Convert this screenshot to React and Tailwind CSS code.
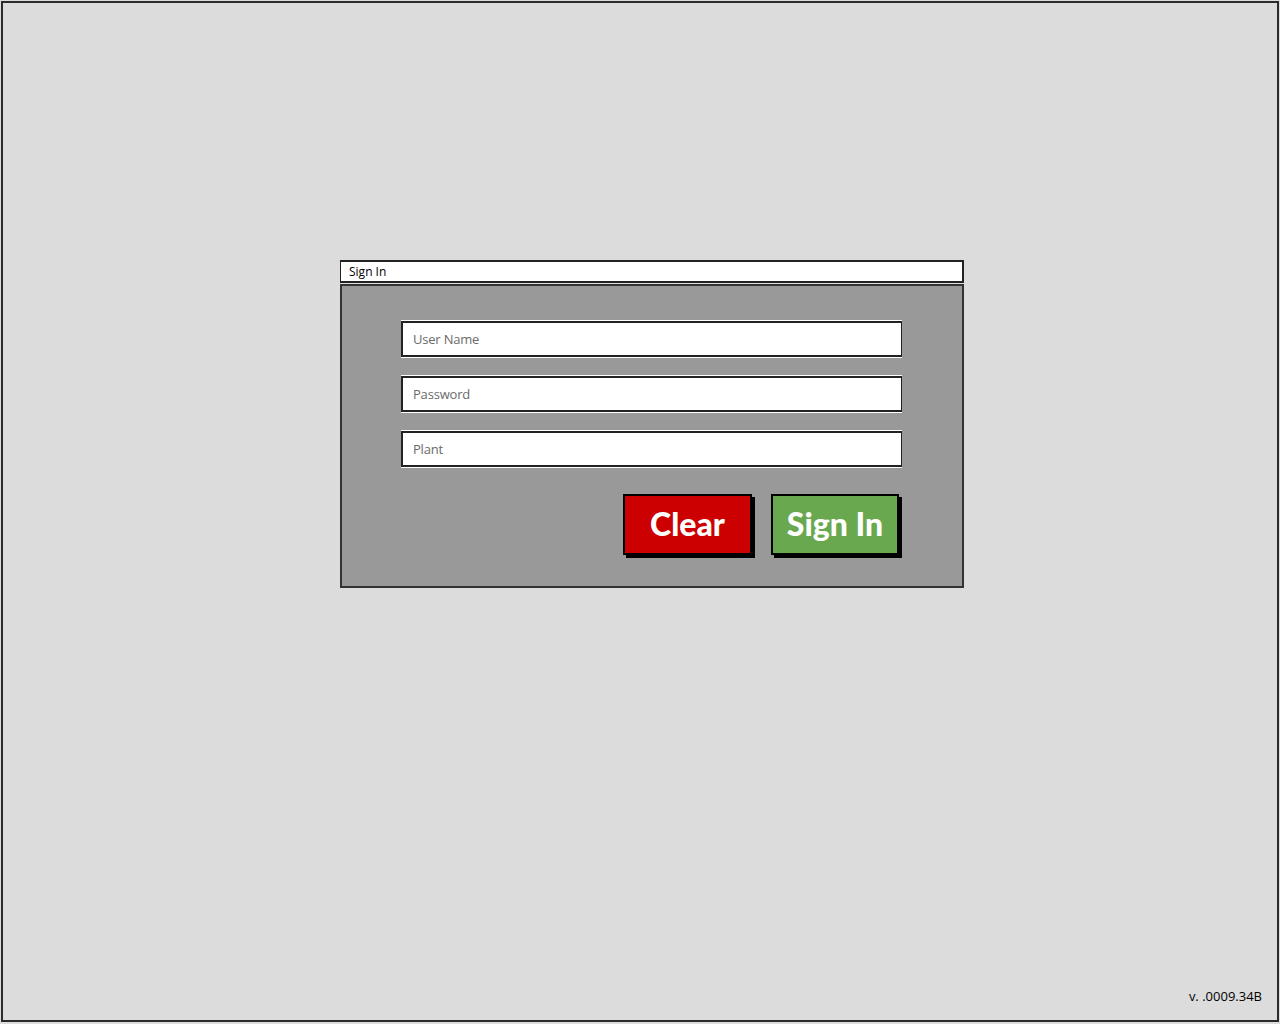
import React from "react";

const sketch = { fontFamily: '"Open Sans", "Liberation Sans", sans-serif' };
const btnFont = { fontFamily: 'Lato, "Open Sans", sans-serif' };

function Field({ label }) {
  return (
    <div className="h-[36px] w-[501px] bg-white border-2 border-[#222] border-r-[1.5px] flex items-center pl-[10px] pt-[1px] text-[13px] tracking-[-0.2px] text-[#6a6a6a] shadow-[0_1px_0_#ffffff,0_-1px_0_#ffffff]">
      {label}
    </div>
  );
}

export default function App() {
  return (
    <div className="w-[1280px] h-[1024px] bg-[#dcdcdc] p-[1px]" style={sketch}>
      <div className="w-[1278px] h-[1021px] border-2 border-[#2b2b2b] flex flex-col relative">
        <div className="pt-[257px] pl-[337px] flex flex-col">
          <div className="w-[624px] flex flex-col">
            <div className="h-[23px] bg-white border-2 border-[#222] border-l-[1.5px] flex items-center pl-[8px] text-[12px] text-black">
              Sign In
            </div>
            <div className="mt-[1px] h-[304px] bg-[#999999] border-2 border-[#333] flex flex-col pl-[59px] pt-[35px]">
              <div className="flex flex-col gap-[19px]">
                <Field label="User Name" />
                <Field label="Password" />
                <Field label="Plant" />
              </div>
              <div className="flex gap-[19px] mt-[27px] pl-[222px]">
                <button
                  className="w-[129px] h-[61px] bg-[#cc0000] border-2 border-black shadow-[3px_3px_0_#000] text-white text-[32px] font-black flex items-center justify-center pb-[2px]"
                  style={btnFont}
                >
                  Clear
                </button>
                <button
                  className="w-[128px] h-[61px] bg-[#6aa84f] border-2 border-black shadow-[3px_3px_0_#000] text-white text-[32px] font-black flex items-center justify-center pb-[2px]"
                  style={btnFont}
                >
                  Sign In
                </button>
              </div>
            </div>
          </div>
        </div>
        <div className="absolute right-[15px] bottom-[14px] text-[13px] text-black">v. .0009.34B</div>
      </div>
    </div>
  );
}
